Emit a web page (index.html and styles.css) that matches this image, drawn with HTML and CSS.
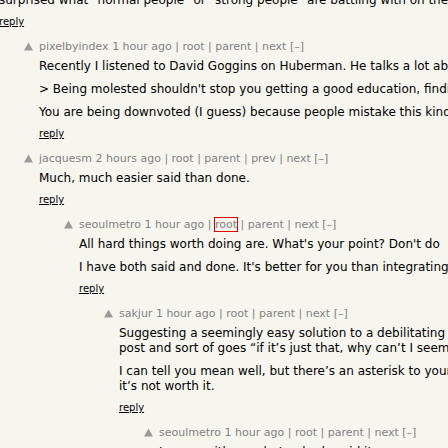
FILE: index.html
```html
<!DOCTYPE html>
<html lang="en">
<head>
<meta charset="utf-8">
<title>Comments</title>
<link rel="stylesheet" href="styles.css">
</head>
<body>
<div class="thread">
  <div class="comment d0">
    <div class="body">
      <div class="commtext top"><p>surprised what "normal people" or "strong people" are battling with on the</p></div>
      <div class="reply"><a href="#">reply</a></div>
    </div>
  </div>

  <div class="comment d1">
    <div class="vote"><svg width="10" height="10" viewBox="0 0 10 10"><polygon points="4.5,0.5 9,8.5 0,8.5" fill="#9a9a9a"/></svg></div>
    <div class="body">
      <div class="comhead"><a class="user" href="#">pixelbyindex</a> <a href="#">1 hour ago</a> | <a href="#">root</a> | <a href="#">parent</a> | <a href="#">next</a> <a href="#">[–]</a></div>
      <div class="commtext">
        <p>Recently I listened to David Goggins on Huberman. He talks a lot about</p>
        <p>&gt; Being molested shouldn't stop you getting a good education, finding</p>
        <p>You are being downvoted (I guess) because people mistake this kind</p>
      </div>
      <div class="reply"><a href="#">reply</a></div>
    </div>
  </div>

  <div class="comment d1">
    <div class="vote"><svg width="10" height="10" viewBox="0 0 10 10"><polygon points="4.5,0.5 9,8.5 0,8.5" fill="#9a9a9a"/></svg></div>
    <div class="body">
      <div class="comhead"><a class="user" href="#">jacquesm</a> <a href="#">2 hours ago</a> | <a href="#">root</a> | <a href="#">parent</a> | <a href="#">prev</a> | <a href="#">next</a> <a href="#">[–]</a></div>
      <div class="commtext">
        <p>Much, much easier said than done.</p>
      </div>
      <div class="reply"><a href="#">reply</a></div>
    </div>
  </div>

  <div class="comment d2">
    <div class="vote"><svg width="10" height="10" viewBox="0 0 10 10"><polygon points="4.5,0.5 9,8.5 0,8.5" fill="#9a9a9a"/></svg></div>
    <div class="body">
      <div class="comhead"><a class="user" href="#">seoulmetro</a> <a href="#">1 hour ago</a> | <a class="focus" href="#">root</a> | <a href="#">parent</a> | <a href="#">next</a> <a href="#">[–]</a></div>
      <div class="commtext">
        <p>All hard things worth doing are. What's your point? Don't do</p>
        <p>I have both said and done. It's better for you than integrating</p>
      </div>
      <div class="reply"><a href="#">reply</a></div>
    </div>
  </div>

  <div class="comment d3">
    <div class="vote"><svg width="10" height="10" viewBox="0 0 10 10"><polygon points="4.5,0.5 9,8.5 0,8.5" fill="#9a9a9a"/></svg></div>
    <div class="body">
      <div class="comhead"><a class="user" href="#">sakjur</a> <a href="#">1 hour ago</a> | <a href="#">root</a> | <a href="#">parent</a> | <a href="#">next</a> <a href="#">[–]</a></div>
      <div class="commtext">
        <p>Suggesting a seemingly easy solution to a debilitating post and sort of goes “if it’s just that, why can’t I seem</p>
        <p>I can tell you mean well, but there’s an asterisk to your it’s not worth it.</p>
      </div>
      <div class="reply"><a href="#">reply</a></div>
    </div>
  </div>

  <div class="comment d4">
    <div class="vote"><svg width="10" height="10" viewBox="0 0 10 10"><polygon points="4.5,0.5 9,8.5 0,8.5" fill="#9a9a9a"/></svg></div>
    <div class="body">
      <div class="comhead"><a class="user" href="#">seoulmetro</a> <a href="#">1 hour ago</a> | <a href="#">root</a> | <a href="#">parent</a> | <a href="#">next</a> <a href="#">[–]</a></div>
      <div class="commtext">
        <p>I agree with you, but nobody said it was easy.</p>
      </div>
      <div class="reply"><a href="#">reply</a></div>
    </div>
  </div>
</div>
</body>
</html>
```

FILE: styles.css
```css
html, body {
  margin: 0;
  padding: 0;
}

body {
  background: #f6f6ef;
  width: 448px;
  height: 448px;
  overflow: hidden;
  font-family: "DejaVu Sans", Verdana, sans-serif;
  color: #000;
}

.thread {
  width: 473px;
  margin-left: -1px;
  margin-top: -7px;
}

.comment {
  display: flex;
  margin-top: 10px;
}

.comment.d0 {
  margin-top: 0;
}

.d1 { padding-left: 25px; }
.d2 { padding-left: 65px; }
.d3 { padding-left: 105px; }
.d4 { padding-left: 145px; }

.vote {
  flex: none;
  width: 15px;
}

.vote svg {
  display: block;
  margin-top: 3px;
}

.body {
  flex: 1;
  min-width: 0;
}

.comhead {
  font-size: 11px;
  line-height: 15px;
  color: #828282;
  white-space: nowrap;
}

.comhead a {
  color: #828282;
  text-decoration: none;
}

.comhead a.focus {
  outline: 1px solid #e00000;
}

.commtext {
  margin-top: 5px;
  font-size: 12px;
  line-height: 15px;
}

.commtext.top {
  margin-top: 0;
}

.commtext p {
  margin: 8px 0 0;
}

.commtext p:first-child {
  margin-top: 0;
}

.reply {
  margin-top: 6px;
  font-size: 10px;
  line-height: 15px;
}

.reply a {
  color: #000;
  text-decoration: underline;
}
```
